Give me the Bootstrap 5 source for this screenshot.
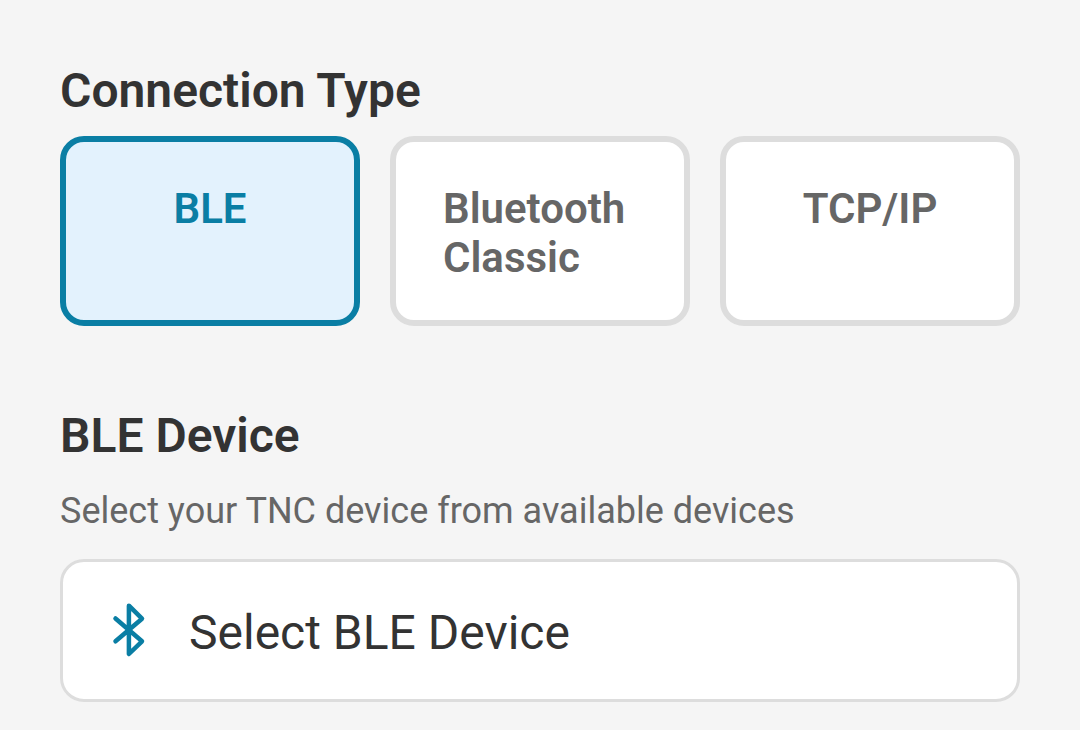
<!DOCTYPE html>
<html lang="en">
<head>
<meta charset="utf-8">
<meta name="viewport" content="width=device-width, initial-scale=1">
<title>Connection settings</title>
<link href="https://cdn.jsdelivr.net/npm/bootstrap@5.3.0/dist/css/bootstrap.min.css" rel="stylesheet">
<style>
body{background:#f5f5f5;color:#333;font-family:Roboto,"Liberation Sans",sans-serif}
.settings{padding:63px 60px 28px}
.section-title{font-size:48px;line-height:56px;font-weight:600;margin:0}
.type-list{gap:30px;margin-top:17px;margin-bottom:82px}
.type-option{flex:1 1 0;min-width:0;border:6px solid #ddd;border-radius:24px;background:#fff;color:#666;font-size:42px;line-height:49px;font-weight:600;padding:42px 47px 38px}
.type-option.selected{border-color:#0a7ea4;background:#e3f2fd;color:#0a7ea4}
.hint{font-size:36px;line-height:42px;color:#666;margin:26px 0 27px}
.device-select{border:3px solid #ddd;border-radius:24px;background:#fff;color:#333;font-size:48px;line-height:56px;padding:41px 45px 36px;gap:36px}
</style>
</head>
<body>
<main class="settings">
<section>
<h1 class="section-title" id="type-title">Connection Type</h1>
<div class="type-list d-flex" role="group" aria-labelledby="type-title">
<button type="button" class="type-option selected d-flex justify-content-center align-items-start" aria-pressed="true">BLE</button>
<button type="button" class="type-option d-flex justify-content-center align-items-start text-start" aria-pressed="false">Bluetooth Classic</button>
<button type="button" class="type-option d-flex justify-content-center align-items-start" aria-pressed="false">TCP/IP</button>
</div>
</section>
<section>
<h2 class="section-title">BLE Device</h2>
<p class="hint">Select your TNC device from available devices</p>
<button type="button" class="device-select w-100 d-flex align-items-center text-start">
<svg width="45" height="60" viewBox="0 0 45 60" fill="none" stroke="#0a7ea4" stroke-width="4.5" stroke-linejoin="round" stroke-linecap="round" aria-hidden="true"><path d="M7.5 15.5 34 38.3 20.9 51V2.7L34 15.7 7.5 38.3"/></svg>
<span>Select BLE Device</span>
</button>
</section>
</main>
<script src="https://cdn.jsdelivr.net/npm/bootstrap@5.3.0/dist/js/bootstrap.bundle.min.js"></script>
</body>
</html>
